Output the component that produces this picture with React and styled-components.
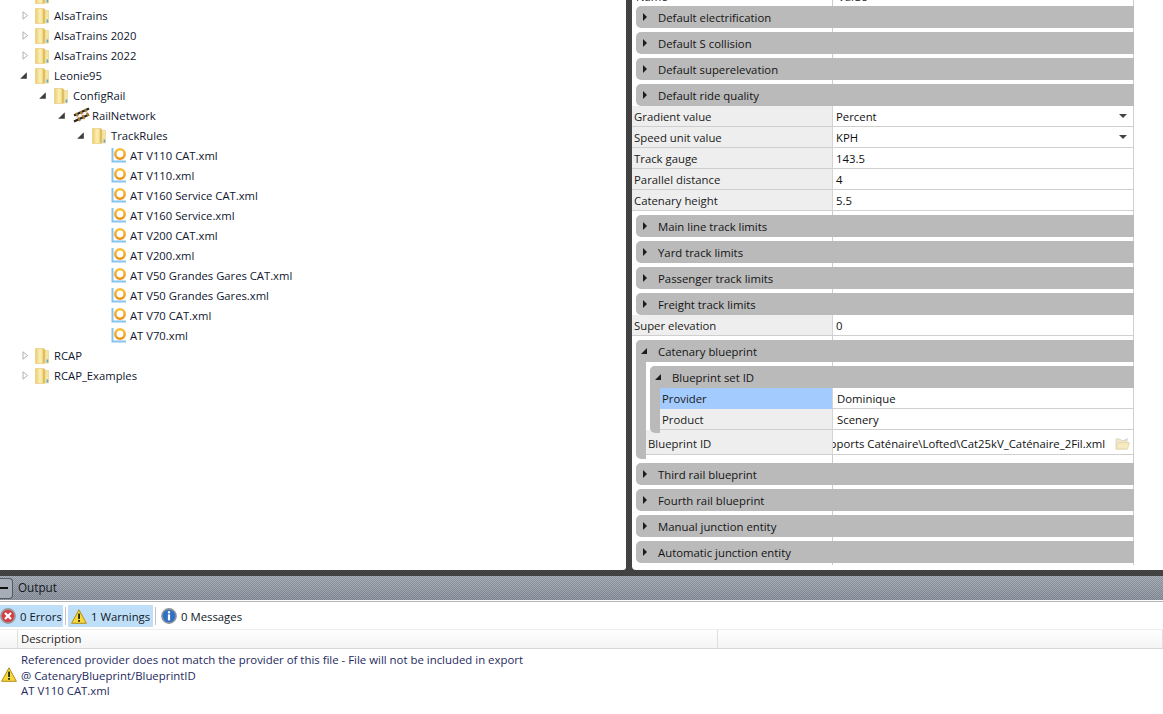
import React from 'react';
import styled, { createGlobalStyle } from 'styled-components';

const GlobalStyle = createGlobalStyle`
  html, body {
    margin: 0;
    padding: 0;
    height: 100%;
    overflow: hidden;
    background: #fff;
  }
  body {
    font-family: "Open Sans", "Noto Sans", "Liberation Sans", sans-serif;
    font-size: 11.35px;
    color: #000;
  }
`;

const checker = 'repeating-conic-gradient(rgba(0,0,0,.16) 0 25%, rgba(255,255,255,.03) 0 50%)';

const Page = styled.div`
  width: 1163px;
  height: 714px;
  display: flex;
  flex-direction: column;
  overflow: hidden;
`;

const Top = styled.div`
  height: 570px;
  flex: none;
  display: flex;
  background-color: #444;
  background-image: ${checker};
  background-size: 2px 2px;
`;

const TreePanel = styled.div`
  width: 626px;
  background: #fff;
  overflow: hidden;
  border-radius: 0 0 3px 0;
`;

const TreeScroll = styled.div`
  margin-top: -15px;
  padding-left: 20px;
`;

const TreeRow = styled.div`
  height: 20px;
  display: flex;
  align-items: center;
  padding-left: ${(p) => p.$level * 19}px;
  color: #10162e;
  font-size: 11.25px;
  white-space: nowrap;
`;

const Arrow = styled.span`
  width: 15px;
  flex: none;
  display: flex;
  align-items: center;
`;

const TreeIcon = styled.span`
  width: 19px;
  height: 18px;
  flex: none;
  display: flex;
  align-items: center;
`;

const Splitter = styled.div`
  width: 6px;
  flex: none;
`;

const HSplit = styled.div`
  height: 6px;
  flex: none;
  background-color: #444;
  background-image: ${checker};
  background-size: 2px 2px;
`;

const PropertyPanel = styled.div`
  width: 531px;
  height: 570px;
  background: #fff;
  border-radius: 0 0 0 4px;
  overflow: hidden;
`;

const Grid = styled.div`
  width: 502px;
  height: 575px;
  margin-top: -10px;
  background:
    linear-gradient(#ccc, #ccc) 200px 0 / 1px 100% no-repeat,
    linear-gradient(#ccc, #ccc) 501px 0 / 1px 100% no-repeat;
  display: flex;
  flex-direction: column;
  overflow: hidden;
  & > * { flex: none; }
`;

const GridHead = styled.div`
  height: 12px;
  display: grid;
  grid-template-columns: 202px 1fr;
  color: #222;
  line-height: 14px;
  padding-left: 4px;
`;

const Section = styled.div`
  margin: 4px 0 0 4px;
  border-radius: 5px 0 0 5px;
  background: ${(p) => p.$open ? 'linear-gradient(#bababa, #bababa) left / 10px 100% no-repeat' : 'transparent'};
  ${(p) => p.$nested && `
    position: relative;
    z-index: 1;
    padding-bottom: 3px;
    margin-bottom: -3px;
  `}
`;

const SectionHead = styled.div`
  height: 22px;
  background: #bababa;
  border-radius: ${(p) => p.$open ? '5px 0 0 0' : '5px 0 0 5px'};
  display: flex;
  align-items: center;
  padding-left: 5px;
  color: #141414;
`;

const HeadArrow = styled.span`
  width: 6px;
  margin-right: 11px;
  flex: none;
  display: flex;
  justify-content: flex-end;
`;

const SectionBody = styled.div`
  margin-left: 10px;
  padding-bottom: ${(p) => p.$pad || 0}px;
`;

const Row = styled.div`
  height: ${(p) => p.$h || 21}px;
  display: grid;
  grid-template-columns: ${(p) => p.$name}px 1fr;
`;

const NameCell = styled.div`
  background: ${(p) => p.$selected ? '#a3cbfd' : '#eeeeee'};
  border-bottom: 1px solid ${(p) => p.$selected ? '#a3cbfd' : '#cfcfcf'};
  border-right: 1px solid #d4d4d4;
  padding: ${(p) => p.$pt || 0}px 0 0 2px;
  display: flex;
  align-items: center;
  color: #1a1a1a;
  white-space: nowrap;
`;

const ValueCell = styled.div`
  background: #fff;
  border-bottom: 1px solid #d0d0d0;
  border-right: 1px solid #d0d0d0;
  padding: ${(p) => p.$pt || 0}px 6px 0 ${(p) => p.$pad ?? 3}px;
  display: flex;
  align-items: center;
  justify-content: space-between;
  overflow: hidden;
  white-space: nowrap;
  color: #111;
`;

const Clip = styled.span`
  display: block;
  width: 272px;
  direction: rtl;
  overflow: hidden;
  text-align: left;
  flex: none;
`;

const DropMark = styled.span`
  width: 0;
  height: 0;
  border-left: 4px solid transparent;
  border-right: 4px solid transparent;
  border-top: 4px solid #444;
`;

const OutputBar = styled.div`
  height: 24px;
  box-sizing: border-box;
  background-image: ${checker}, linear-gradient(#a8b0ba, #929aa6);
  background-size: 2px 2px, 100% 100%;
  display: flex;
  align-items: center;
  color: #14181f;
  font-size: 11.7px;
  flex: none;
`;

const OutputTitle = styled.span`
  margin-top: -2px;
`;

const CollapseButton = styled.div`
  width: 13px;
  height: 19px;
  margin-left: -1px;
  margin-right: 5px;
  border: 1px solid #555b63;
  border-left: none;
  border-radius: 0 4px 4px 0;
  background: #a6adb6;
  display: flex;
  align-items: center;
  &::before {
    content: "";
    display: block;
    width: 9px;
    height: 2px;
    background: #111;
  }
`;

const Output = styled.div`
  flex: 1;
  background: #fff;
  padding-top: 1px;
`;

const Rule = styled.div`
  height: 1px;
  background: #b4b4b4;
`;

const TabStrip = styled.div`
  height: 26px;
  padding-top: 2px;
  box-sizing: border-box;
  display: flex;
  align-items: stretch;
`;

const Filter = styled.div`
  display: flex;
  align-items: center;
  gap: 4px;
  height: 22px;
  width: ${(p) => p.$w}px;
  margin-top: 1px;
  box-sizing: border-box;
  padding-left: ${(p) => p.$pl}px;
  background: ${(p) => p.$on ? '#bfdff8' : 'transparent'};
  color: #111827;
  white-space: nowrap;
  svg { flex: none; }
`;

const Sep = styled.div`
  width: 1px;
  height: 18px;
  margin: 3px 2px 0;
  background: #c4c4c4;
`;

const HeaderRow = styled.div`
  height: 20px;
  margin-top: 1px;
  display: grid;
  grid-template-columns: 18px 700px 1fr;
  background: linear-gradient(#fff, #f4f4f4);
  border-top: 1px solid #ededed;
  border-bottom: 1px solid #d8d8d8;
  box-sizing: border-box;
`;

const HeaderCell = styled.div`
  border-right: 1px solid #e0e0e0;
  padding: 0 0 2px 3px;
  display: flex;
  align-items: center;
  color: #2a1e1e;
`;

const MessageRow = styled.div`
  display: grid;
  grid-template-columns: 21px 1fr;
  align-items: center;
  padding-top: 3px;
  height: 46px;
  svg { margin: 0 0 3px 1px; }
`;

const MessageText = styled.div`
  font-size: 11.4px;
  line-height: 15.7px;
  color: #1e2a5e;
  white-space: nowrap;
`;

const Collapsed = () => (
  <svg width="7" height="9" viewBox="0 0 7 9" style={{ marginLeft: 2 }}><path d="M1 .8 L5.5 4.5 L1 8.2 Z" fill="#fff" stroke="#b0b0b0" /></svg>
);

const Expanded = () => (
  <svg width="7" height="7" viewBox="0 0 7 7"><path d="M6.8 .2 V6.8 H.2 Z" fill="#3c3c3c" /></svg>
);

const SmallClosed = () => (
  <svg width="4" height="8" viewBox="0 0 4 8"><path d="M0 0 L4 4 L0 8 Z" fill="#1c1c1c" /></svg>
);

const SmallOpen = () => (
  <svg width="6" height="6" viewBox="0 0 6 6"><path d="M6 0 V6 H0 Z" fill="#1c1c1c" /></svg>
);

const Folder = () => (
  <svg width="14" height="17" viewBox="0 0 14 17">
    <defs>
      <linearGradient id="fd" x1="0" x2="1" y1="0" y2="0">
        <stop offset="0" stopColor="#eccd6c" />
        <stop offset="0.6" stopColor="#fbeeb4" />
        <stop offset="1" stopColor="#f4e092" />
      </linearGradient>
    </defs>
    <path d="M.5 1.5 H8 V16.5 H.5 Z" fill="url(#fd)" stroke="#e2c676" strokeWidth=".6" />
    <path d="M8 1 L10.2 2.5 V16.5 H8 Z" fill="#e0bd5a" />
    <path d="M10.2 3.5 H13.5 V16 H10.2 Z" fill="#f6e5a2" stroke="#e6cf84" strokeWidth=".6" />
    <rect x="11.6" y="12.5" width="1.6" height="3" fill="#5aa6e0" />
  </svg>
);

const RailIcon = () => (
  <svg width="17" height="16" viewBox="0 0 17 16">
    <path d="M1 8.5 L16 1.5" stroke="#262626" strokeWidth="2.4" />
    <path d="M1 14.5 L16 7.5" stroke="#262626" strokeWidth="2.4" />
    <path d="M3 6 L7 14 M7.5 4 L11.5 12 M12 2 L15.5 9" stroke="#b07c30" strokeWidth="2" />
    <path d="M2 11.5 L15 4.5" stroke="#f0f0f0" strokeWidth="1.1" />
  </svg>
);

const RuleIcon = () => (
  <svg width="16" height="16" viewBox="0 0 16 16">
    <defs>
      <linearGradient id="ring" x1="0" x2="0" y1="0" y2="1">
        <stop offset="0" stopColor="#f8c040" />
        <stop offset="1" stopColor="#ee9418" />
      </linearGradient>
    </defs>
    <path d="M1.5 1 V14.5 H15" fill="none" stroke="#86c4ee" strokeWidth="2" />
    <circle cx="9" cy="7" r="4.7" fill="#fff" stroke="url(#ring)" strokeWidth="2.5" />
  </svg>
);

const ErrorIcon = () => (
  <svg width="16" height="16" viewBox="0 0 16 16">
    <circle cx="8" cy="8" r="7.1" fill="#d4404a" stroke="#9b9b9b" strokeWidth="1.6" />
    <path d="M5 5 L11 11 M11 5 L5 11" stroke="#fff" strokeWidth="2.2" />
  </svg>
);

const WarnIcon = () => (
  <svg width="16" height="15" viewBox="0 0 16 15">
    <path d="M8 .8 L15.4 14.3 H.6 Z" fill="#f8d838" stroke="#b08c1c" strokeLinejoin="round" />
    <rect x="7.2" y="4.6" width="1.7" height="5.4" fill="#1a1a1a" />
    <rect x="7.2" y="11" width="1.7" height="1.8" fill="#1a1a1a" />
  </svg>
);

const InfoIcon = () => (
  <svg width="16" height="16" viewBox="0 0 16 16">
    <circle cx="8" cy="8" r="7.1" fill="#2f6fc4" stroke="#8f949b" strokeWidth="1.6" />
    <rect x="6.9" y="3.2" width="2.2" height="2.2" fill="#fff" />
    <rect x="6.9" y="6.4" width="2.2" height="6" fill="#fff" />
  </svg>
);

const OpenFolder = () => (
  <svg width="15" height="13" viewBox="0 0 15 13" style={{ marginRight: -3, flex: 'none' }}>
    <path d="M1 2 H5 L6 3.4 H12 V12 H1 Z" fill="#f1e9cf" stroke="#d8cfae" strokeWidth=".8" />
    <path d="M3.4 5.6 H14.5 L12.5 12 H1 Z" fill="#f6ebc0" stroke="#e0d4a6" strokeWidth=".8" />
    <path d="M9 3 L13 .8 L12.4 3.6" fill="#c6dcee" />
  </svg>
);

const tree = [
  { level: 0, label: '', arrow: 'closed', icon: 'folder' },
  { level: 0, label: 'AlsaTrains', arrow: 'closed', icon: 'folder' },
  { level: 0, label: 'AlsaTrains 2020', arrow: 'closed', icon: 'folder' },
  { level: 0, label: 'AlsaTrains 2022', arrow: 'closed', icon: 'folder' },
  { level: 0, label: 'Leonie95', arrow: 'open', icon: 'folder' },
  { level: 1, label: 'ConfigRail', arrow: 'open', icon: 'folder' },
  { level: 2, label: 'RailNetwork', arrow: 'open', icon: 'rail' },
  { level: 3, label: 'TrackRules', arrow: 'open', icon: 'folder' },
  { level: 4, label: 'AT V110 CAT.xml', icon: 'rule' },
  { level: 4, label: 'AT V110.xml', icon: 'rule' },
  { level: 4, label: 'AT V160 Service CAT.xml', icon: 'rule' },
  { level: 4, label: 'AT V160 Service.xml', icon: 'rule' },
  { level: 4, label: 'AT V200 CAT.xml', icon: 'rule' },
  { level: 4, label: 'AT V200.xml', icon: 'rule' },
  { level: 4, label: 'AT V50 Grandes Gares CAT.xml', icon: 'rule' },
  { level: 4, label: 'AT V50 Grandes Gares.xml', icon: 'rule' },
  { level: 4, label: 'AT V70 CAT.xml', icon: 'rule' },
  { level: 4, label: 'AT V70.xml', icon: 'rule' },
  { level: 0, label: 'RCAP', arrow: 'closed', icon: 'folder' },
  { level: 0, label: 'RCAP_Examples', arrow: 'closed', icon: 'folder' },
];

const ClosedSection = ({ title }) => (
  <Section>
    <SectionHead>
      <HeadArrow><SmallClosed /></HeadArrow>
      {title}
    </SectionHead>
  </Section>
);

const Prop = ({ name, value, drop }) => (
  <Row $name={201}>
    <NameCell>{name}</NameCell>
    <ValueCell>
      {value}
      {drop && <DropMark />}
    </ValueCell>
  </Row>
);

export default function App() {
  return (
    <Page>
      <GlobalStyle />
      <Top>
        <TreePanel>
          <TreeScroll>
            {tree.map((node, i) => (
              <TreeRow key={i} $level={node.level}>
                <Arrow>
                  {node.arrow === 'closed' && <Collapsed />}
                  {node.arrow === 'open' && <Expanded />}
                </Arrow>
                <TreeIcon>
                  {node.icon === 'folder' && <Folder />}
                  {node.icon === 'rail' && <RailIcon />}
                  {node.icon === 'rule' && <RuleIcon />}
                </TreeIcon>
                {node.label}
              </TreeRow>
            ))}
          </TreeScroll>
        </TreePanel>
        <Splitter />
        <PropertyPanel>
          <Grid>
            <GridHead>
              <span>Name</span>
              <span>Value</span>
            </GridHead>
            <ClosedSection title="Default electrification" />
            <ClosedSection title="Default S collision" />
            <ClosedSection title="Default superelevation" />
            <ClosedSection title="Default ride quality" />
            <Prop name="Gradient value" value="Percent" drop />
            <Prop name="Speed unit value" value="KPH" drop />
            <Prop name="Track gauge" value="143.5" />
            <Prop name="Parallel distance" value="4" />
            <Prop name="Catenary height" value="5.5" />
            <ClosedSection title="Main line track limits" />
            <ClosedSection title="Yard track limits" />
            <ClosedSection title="Passenger track limits" />
            <ClosedSection title="Freight track limits" />
            <Prop name="Super elevation" value="0" />
            <Section $open>
              <SectionHead $open>
                <HeadArrow><SmallOpen /></HeadArrow>
                Catenary blueprint
              </SectionHead>
              <SectionBody $pad={4}>
                <Section $open $nested>
                  <SectionHead $open>
                    <HeadArrow><SmallOpen /></HeadArrow>
                    Blueprint set ID
                  </SectionHead>
                  <SectionBody>
                    <Row $name={173}>
                      <NameCell $selected>Provider</NameCell>
                      <ValueCell $pad={4}>Dominique</ValueCell>
                    </Row>
                    <Row $name={173}>
                      <NameCell>Product</NameCell>
                      <ValueCell $pad={4}>Scenery</ValueCell>
                    </Row>
                  </SectionBody>
                </Section>
                <Row $name={187} $h={25}>
                  <NameCell $pt={3}>Blueprint ID</NameCell>
                  <ValueCell $pad={0} $pt={3}>
                    <Clip>Supports Caténaire\Lofted\Cat25kV_Caténaire_2Fil.xml</Clip>
                    <OpenFolder />
                  </ValueCell>
                </Row>
              </SectionBody>
            </Section>
            <ClosedSection title="Third rail blueprint" />
            <ClosedSection title="Fourth rail blueprint" />
            <ClosedSection title="Manual junction entity" />
            <ClosedSection title="Automatic junction entity" />
          </Grid>
        </PropertyPanel>
      </Top>
      <HSplit />
      <OutputBar>
        <CollapseButton />
        <OutputTitle>Output</OutputTitle>
      </OutputBar>
      <Output>
        <Rule />
        <TabStrip>
          <Filter $on $w={63} $pl={0}><ErrorIcon />0 Errors</Filter>
          <Sep />
          <Filter $on $w={85} $pl={3}><WarnIcon />1 Warnings</Filter>
          <Sep />
          <Filter $w={100} $pl={3}><InfoIcon />0 Messages</Filter>
        </TabStrip>
        <HeaderRow>
          <HeaderCell />
          <HeaderCell>Description</HeaderCell>
          <HeaderCell />
        </HeaderRow>
        <MessageRow>
          <WarnIcon />
          <MessageText>
            Referenced provider does not match the provider of this file - File will not be included in export<br />
            @ CatenaryBlueprint/BlueprintID<br />
            AT V110 CAT.xml
          </MessageText>
        </MessageRow>
      </Output>
    </Page>
  );
}
